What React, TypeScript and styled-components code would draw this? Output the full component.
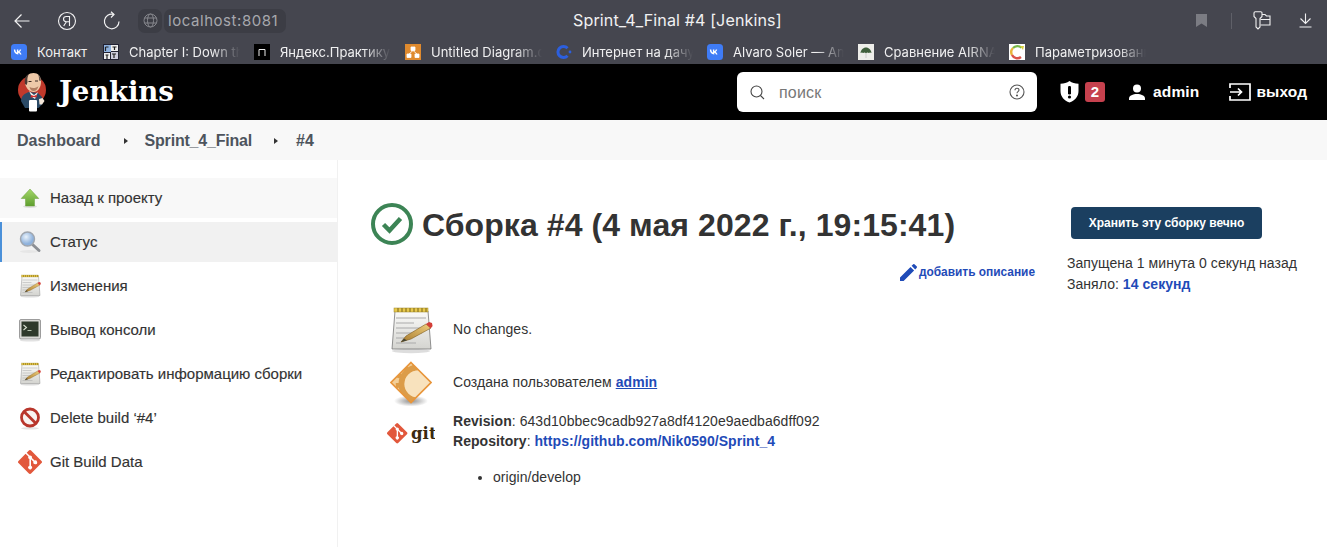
import React from "react";
import styled, { createGlobalStyle } from "styled-components";

const Global = createGlobalStyle`
  html, body { margin: 0; padding: 0; background: #fff; }
  body { font-family: "Liberation Sans", Arial, sans-serif; color: #333; overflow: hidden; }
  * { box-sizing: border-box; }
  svg { flex: none; }
`;
const Page = styled.div`width: 1327px; height: 547px; display: flex; flex-direction: column; overflow: hidden;`;

/* Browser chrome */
const Chrome = styled.div`height: 64px; background: #45464f; display: flex; flex-direction: column; font-family: Inter, sans-serif; color: #fff;`;
const TopRow = styled.div`height: 41px; display: flex; align-items: center; position: relative;`;
const NavIcon = styled.span<{ $ml: number }>`display: flex; margin-left: ${p => p.$ml}px;`;
const GlobePill = styled.span`margin-left: 17px; width: 24px; height: 24px; background: #3c3d45; border-radius: 7px; display: flex; align-items: center; justify-content: center;`;
const UrlPill = styled.span`margin-left: 2px; height: 24px; width: 122px; padding-left: 4px; background: #3c3d45; border-radius: 7px; font-size: 15px; line-height: 24px; color: #a7a8ad; letter-spacing: .55px; white-space: nowrap;`;
const PageTitle = styled.div`position: absolute; left: 573px; top: 11px; font-size: 16.1px; line-height: 19px; letter-spacing: .1px; color: #f1f1f2; white-space: nowrap;`;
const RightTools = styled.div`margin-left: auto; display: flex; align-items: center; padding-right: 15px;`;
const ToolDivider = styled.span`width: 1px; height: 16px; background: #5f6068; margin: 0 21px 0 24px;`;
const BookRow = styled.div`height: 23px; display: flex; align-items: flex-start; padding-top: 3px; position: relative;`;
const Book = styled.div<{ $w: number }>`width: ${p => p.$w}px; padding-right: 14px; display: flex; align-items: center; gap: 10px; height: 16px; flex: none;`;
const BookLabel = styled.span<{ $fade?: boolean }>`font-size: 13px; line-height: 16px; color: #f0f0f1; white-space: nowrap; overflow: hidden; flex: 1; min-width: 0; ${p => p.$fade ? "-webkit-mask-image: linear-gradient(90deg,#000 75%,transparent 100%);mask-image: linear-gradient(90deg,#000 75%,transparent 100%);" : ""}`;
const FavBox = styled.span`width: 16px; height: 16px; flex: none; display: flex;`;

/* Jenkins header */
const Header = styled.header`height: 56px; background: #000; display: flex; align-items: center; padding-left: 17px; color: #fff;`;
const Brand = styled.div`display: flex; align-items: center; gap: 12px; width: 720px; flex: none;`;
const BrandName = styled.span`font-family: "DejaVu Serif", "Liberation Serif", serif; font-weight: 700; font-size: 27.6px; line-height: 30px; letter-spacing: -.2px; margin-top: -1px;`;
const Search = styled.div`width: 300px; height: 40px; background: #fff; border-radius: 6px; display: flex; align-items: center; padding: 0 12px 0 13px; flex: none;`;
const SearchText = styled.span`font-size: 16px; color: #777; margin-left: 14px; flex: 1; letter-spacing: .2px; padding-top: 2px;`;
const Badge = styled.span`width: 20px; height: 20px; margin-left: 6px; background: #c6414e; border-radius: 3px; font-size: 15px; font-weight: 700; line-height: 20px; text-align: center;`;
const HeadLink = styled.span<{ $ml: number; $gap: number }>`margin-left: ${p => p.$ml}px; display: flex; align-items: center; font-weight: 700; font-size: 15.5px; gap: ${p => p.$gap}px; letter-spacing: .15px;`;

/* Breadcrumb */
const Crumbs = styled.nav`height: 40px; background: #f8f8f8; display: flex; align-items: center; padding: 1px 0 0 17px; color: #4d545d; font-size: 16px; font-weight: 700;`;
const Crumb = styled.span<{ $ls?: number }>`letter-spacing: ${p => p.$ls || 0}px;`;
const Sep = styled.span<{ $l: number; $r: number }>`width: 0; height: 0; border-left: 4px solid #333; border-top: 3.5px solid transparent; border-bottom: 3.5px solid transparent; margin: 0 ${p => p.$r}px 0 ${p => p.$l}px;`;

/* Body */
const Body = styled.div`flex: 1; display: flex; min-height: 0;`;
const Side = styled.aside`width: 338px; flex: none; border-right: 1px solid #f1f1f1; padding-top: 18px; display: flex; flex-direction: column; gap: 4px;`;
const Task = styled.a<{ $bg?: string; $active?: boolean }>`height: 40px; display: flex; align-items: center; gap: 10px; padding: 0 0 2px ${p => p.$active ? 18 : 20}px; background: ${p => p.$bg || "transparent"}; ${p => p.$active ? "border-left: 2px solid #4a90d9;" : ""} font-size: 15px; color: #333; -webkit-text-stroke: .15px #333;`;
const TaskIcon = styled.span`width: 20px; height: 24px; margin-top: 2px; flex: none; display: flex; align-items: center; justify-content: center;`;

const Main = styled.main`flex: 1; position: relative; display: flex; padding: 42px 0 0 33px;`;
const Left = styled.div`width: 664px; flex: none; display: flex; flex-direction: column;`;
const TitleRow = styled.div`display: flex; align-items: center; gap: 9px; height: 44px;`;
const Title = styled.h1`margin: 1px 0 0; font-size: 32px; line-height: 44px; font-weight: 700; color: #333; white-space: nowrap; letter-spacing: .08px;`;
const DescLink = styled.a`align-self: flex-end; margin-top: 17px; display: flex; align-items: center; gap: 2px; color: #1f4bb8; font-size: 11.9px; font-weight: 700; line-height: 18px;`;
const Rows = styled.div`margin-top: 25px; display: flex; flex-direction: column; padding-left: 16px;`;
const Row = styled.div<{ $h: number }>`min-height: ${p => p.$h}px; display: flex; align-items: flex-start; gap: 18px; font-size: 14px; line-height: 20px; letter-spacing: .05px;`;
const RowIcon = styled.span<{ $h?: number }>`width: 48px; ${p => p.$h ? `height: ${p.$h}px;` : ""} flex: none; display: flex; justify-content: center;`;
const RowText = styled.div<{ $pt: number }>`padding-top: ${p => p.$pt}px; color: #333;`;
const Strong = styled.b`font-weight: 700; color: #333;`;
const Link = styled.a<{ $ul?: boolean }>`color: #1f4bb8; font-weight: 700; text-decoration: ${p => p.$ul ? "underline" : "none"};`;
const Branches = styled.ul`margin: 16px 0 0; padding: 0 0 0 40px; list-style: disc;`;
const Right = styled.div`margin-left: 32px; display: flex; flex-direction: column; margin-top: 5px;`;
const Keep = styled.button`margin-left: 4px; width: 191px; height: 32px; background: #1b3f60; color: #fff; border: 0; border-radius: 4px; font: 700 12px "Liberation Sans", Arial, sans-serif;`;
const Meta = styled.div`margin-top: 14px; font-size: 14px; line-height: 21px; color: #333; white-space: nowrap; letter-spacing: .05px;`;

const Notepad = ({ s }: { s: number }) => (
  <svg width={s} height={s} viewBox="0 0 48 48">
    <defs>
      <linearGradient id={`np${s}`} x1="0" y1="0" x2="0" y2="1"><stop offset="0" stopColor="#fbfbf9" /><stop offset="1" stopColor="#d4d4d0" /></linearGradient>
      <linearGradient id={`pc${s}`} x1="0" y1="1" x2="1" y2="0"><stop offset="0" stopColor="#a87a2d" /><stop offset="1" stopColor="#efcf7d" /></linearGradient>
    </defs>
    <ellipse cx="24" cy="45" rx="19" ry="2.2" fill="#ddd" />
    <path d="M5 43l3-38h33l3 38z" fill={`url(#np${s})`} stroke="#777" strokeWidth=".8" />
    <rect x="7" y="2" width="34" height="4" fill="#e7c94d" stroke="#9b8426" strokeWidth=".5" />
    <path d="M11 2v4M15 2v4M19 2v4M23 2v4M27 2v4M31 2v4M35 2v4M39 2v4" stroke="#8b7420" strokeWidth="1.2" />
    <path d="M9 12h30M9 17h18M9 22h30M9 27h26M9 32h12M9 37h20" stroke="#aaa" strokeWidth="1" />
    <path d="M14 36l5-6 20-12 5 4-20 11z" fill={`url(#pc${s})`} stroke="#7c5a1e" strokeWidth=".6" />
    <path d="M14 36l3-3.500 3 2z" fill="#443" />
    <path d="M39 18l3-2 3 1 .6 3-2 2.500z" fill="#d33f38" />
  </svg>
);

const Up = () => (
  <svg width="20" height="22" viewBox="0 0 20 22">
    <defs><linearGradient id="gu" x1="0" y1="0" x2="0" y2="1"><stop offset="0" stopColor="#a5d86a" /><stop offset="1" stopColor="#5e9e2e" /></linearGradient></defs>
    <ellipse cx="10" cy="19.500" rx="7" ry="1.500" fill="#ddd" />
    <path d="M10 2l8.800 9.500H14.500V19h-9v-7.500H1.200z" fill="url(#gu)" stroke="#6a9f3b" strokeWidth=".5" />
  </svg>
);
const Magnifier = () => (
  <svg width="24" height="24" viewBox="0 0 24 24">
    <defs><radialGradient id="gm" cx=".4" cy=".35"><stop offset="0" stopColor="#e9f2fb" /><stop offset="1" stopColor="#8fb2dc" /></radialGradient></defs>
    <ellipse cx="11" cy="21.500" rx="9" ry="1.500" fill="#e6e6e6" />
    <path d="M14.500 14.500l6.500 6" stroke="#8c8f94" strokeWidth="3" strokeLinecap="round" />
    <circle cx="9.500" cy="9" r="7" fill="url(#gm)" stroke="#a0a6ae" strokeWidth="1.400" />
  </svg>
);
const Terminal = () => (
  <svg width="24" height="24" viewBox="0 0 24 24">
    <rect x="1.500" y="1.500" width="21" height="19.500" rx="1.500" fill="#d8d8d4" stroke="#888" strokeWidth=".8" />
    <rect x="3.500" y="3.500" width="17" height="15" fill="#2f3a2b" />
    <path d="M5.500 7l3 2.500-3 2.500" fill="none" stroke="#d8e0d0" strokeWidth="1.100" />
    <path d="M9.500 12.500h4" stroke="#b8c4b0" strokeWidth="1" />
    <ellipse cx="12" cy="22.500" rx="10" ry="1" fill="#e2e2e2" />
  </svg>
);
const NoEntry = () => (
  <svg width="22" height="24" viewBox="0 0 22 24">
    <ellipse cx="11" cy="22.300" rx="9" ry="1.300" fill="#e4e4e4" />
    <circle cx="11" cy="11.500" r="8.500" fill="#f8f3f1" stroke="#b8362c" strokeWidth="2.800" />
    <path d="M5 5.500l12 12" stroke="#b8362c" strokeWidth="2.800" />
  </svg>
);
const GIT_D = "M23.500 10.900 13.100.5a1.600 1.600 0 0 0-2.200 0L8.700 2.700l2.800 2.800a1.900 1.900 0 0 1 2.400 2.400l2.700 2.700a1.900 1.900 0 1 1-1.100 1.100l-2.500-2.500v6.600a1.900 1.900 0 1 1-1.600-.1v-6.700a1.900 1.900 0 0 1-1-2.500L7.600 3.800.5 10.900a1.600 1.600 0 0 0 0 2.200l10.400 10.400a1.600 1.600 0 0 0 2.200 0l10.400-10.400a1.600 1.600 0 0 0 0-2.200z";
const GitLogo = ({ s }: { s: number }) => (
  <svg width={s} height={s} viewBox="0 0 24 24"><path fill="#e2583c" d={GIT_D} /></svg>
);
const UserDiamond = () => (
  <svg width="42" height="46" viewBox="3 0 42 46">
    <defs>
      <clipPath id="dc"><path d="M24 1.500 44 21.500 24 41.500 4 21.500z" /></clipPath>
      <radialGradient id="gs"><stop offset="0" stopColor="#8e8e8e" /><stop offset="1" stopColor="#fff" /></radialGradient>
    </defs>
    <ellipse cx="24" cy="40" rx="17" ry="5.500" fill="url(#gs)" />
    <path d="M24 1.500 44 21.500 24 41.500 4 21.500z" fill="#f3cf98" />
    <g clipPath="url(#dc)">
      <circle cx="31" cy="23" r="16.500" fill="none" stroke="#dc9c48" strokeWidth="6" />
      <circle cx="31" cy="23" r="20.500" fill="none" stroke="#dc9c48" strokeWidth="3.500" strokeDasharray="5 5" />
      <circle cx="31" cy="23" r="13.500" fill="#f8e2bd" />
    </g>
    <path d="M24 1.500 44 21.500 24 41.500 4 21.500z" fill="none" stroke="#e8953a" strokeWidth="1.600" />
  </svg>
);
const Jenkins = () => (
  <svg width="30" height="40" viewBox="0 0 30 40">
    <circle cx="15" cy="18" r="14" fill="#c0392b" />
    <path d="M4 29c0-5 4-8 8-9l9 1 4 4 .5 7-4 4H8z" fill="#2b4a66" />
    <path d="M12 19l5 4 4-3-3 7-3-2z" fill="#f4f4f0" />
    <path d="M14 23l3 1 3-1.500-.5 3-3-.6-3 .8z" fill="#cf2d2d" />
    <path d="M8 10C8 4 12 1 16.500 1S24 4 24 10c0 5-3 10-7.500 10S8 15 8 10z" fill="#eec9a8" />
    <path d="M8 12C6.800 6 10 2.500 12 2c-1.500 2-2 5-1.500 8l-.8 3z" fill="#4a3a34" />
    <path d="M23.800 9C24 6 22.500 3.500 21 2.500c1 2 1.200 4 1 6z" fill="#6b5a50" />
    <path d="M12.500 15c3 1.700 6.500 1.300 9-1-.6 3-2.600 5-5 5-2 0-3.400-1.600-4-4z" fill="#b07f62" />
    <path d="M11.500 9.500h3M18 9h3" stroke="#3a2a22" strokeWidth="1" />
    <rect x="12" y="28" width="8" height="11.500" rx="1" fill="#fff" />
    <path d="M22 27l3.500-1 2 3-2.500 3.500h-2.500z" fill="#f4e6d8" />
  </svg>
);

const fav = {
  vk: <svg width="16" height="16" viewBox="0 0 16 16"><rect width="16" height="16" rx="3.500" fill="#3f7cf6" /><path d="M2.800 5.500h1.500c.1 2 1 3 1.600 3.100V5.500h1.400v1.800c.6-.1 1.200-.8 1.500-1.800h1.400c-.2 1.100-1 2-1.600 2.400.6.300 1.500 1 1.900 2.500H9c-.3-1-1-1.600-1.700-1.700v1.700h-.2c-2.700 0-4.200-1.900-4.300-4.900z" fill="#fff" /></svg>,
  ft: <svg width="16" height="16" viewBox="0 0 16 16"><rect width="16" height="16" fill="#223" /><rect x="1" y="1" width="7" height="7" fill="#8db0dd" /><rect x="8" y="1" width="7" height="6" fill="#eee" /><rect x="1" y="9" width="6" height="6" fill="#eee" /><rect x="8" y="8" width="7" height="7" fill="#ccd" /><path d="M2.500 3h3M2.500 3v4M9.500 3h4M11.500 3v3M2.500 11h3M4 11v4M9 10h4M11 10v4" stroke="#222" strokeWidth="1.200" /></svg>,
  ya: <svg width="16" height="16" viewBox="0 0 16 16"><rect width="16" height="16" fill="#000" /><path d="M5 12V5.500h6V12" fill="none" stroke="#eee" strokeWidth="1" /></svg>,
  diagram: <svg width="16" height="16" viewBox="0 0 16 16"><rect width="16" height="16" fill="#df8a2e" /><path d="M6 3h4v3.500H6zM2 10h4v3.500H2zM10 10h4v3.500h-4zM8 6.500L4 10M8 6.500l4 3.500" fill="#fff" stroke="#fff" strokeWidth=".8" /></svg>,
  c: <svg width="16" height="16" viewBox="0 0 16 16"><path d="M11.500 4.300a5.500 5.500 0 1 0 0 7.400" fill="none" stroke="#2c5fde" strokeWidth="3" /><circle cx="14" cy="8" r="1.400" fill="#2c5fde" /></svg>,
  air: <svg width="16" height="16" viewBox="0 0 16 16"><rect width="16" height="16" fill="#eeeeea" /><path d="M2.500 9C3 5 6 3.500 8 3.500S13 5 13.500 9c-1-.8-1.800-.8-2.700 0-.8-.8-1.800-.8-2.800.2-1-1-2-1-2.800-.2-.9-.8-1.700-.8-2.700 0z" fill="#3f5f3c" /><path d="M8 9v5" stroke="#ccc" strokeWidth="1" /></svg>,
  param: <svg width="16" height="16" viewBox="0 0 16 16"><rect width="16" height="16" fill="#fff" /><path d="M12.500 3.700A6 6 0 0 0 4 4" fill="none" stroke="#78b84a" strokeWidth="2.400" /><path d="M4 4a6 6 0 0 0-1 7" fill="none" stroke="#e8b43a" strokeWidth="2.400" /><path d="M3 11a6 6 0 0 0 9 2" fill="none" stroke="#d9534a" strokeWidth="2.400" /><path d="M11 2l4 0-1 4z" fill="#d8d040" /></svg>,
};

export default function App() {
  return (
    <Page>
      <Global />
      <Chrome>
        <TopRow>
          <NavIcon $ml={14}>
            <svg width="16" height="16" viewBox="0 0 16 16" fill="none" stroke="#f2f2f3" strokeWidth="1.200"><path d="M15.500 8H1M7.500 1.500 1 8l6.500 6.500" /></svg>
          </NavIcon>
          <NavIcon $ml={27}>
            <svg width="20" height="20" viewBox="0 0 20 20" fill="none" stroke="#f2f2f3" strokeWidth="1.100"><circle cx="10" cy="10" r="8.500" /><path d="M12.500 15V5.500H9.300c-1.700 0-2.800 1-2.800 2.600s1.100 2.600 2.800 2.600h3.200M9.400 10.700 6.700 15" /></svg>
          </NavIcon>
          <NavIcon $ml={26}>
            <svg width="18" height="20" viewBox="0 0 18 20" fill="none" stroke="#f2f2f3" strokeWidth="1.200"><path d="M10.500 3.400A7.300 7.300 0 1 0 16 10.500" /><path d="M8 .8 11 3.500 8 6.500" /></svg>
          </NavIcon>
          <GlobePill>
            <svg width="15" height="15" viewBox="0 0 15 15" fill="none" stroke="#85868c" strokeWidth="1"><circle cx="7.500" cy="7.500" r="6.500" /><ellipse cx="7.500" cy="7.500" rx="3" ry="6.500" /><path d="M1.500 5h12M1.500 10h12" /></svg>
          </GlobePill>
          <UrlPill>localhost:8081</UrlPill>
          <PageTitle>Sprint_4_Final #4 [Jenkins]</PageTitle>
          <RightTools>
            <svg width="11" height="13" viewBox="0 0 11 13"><path d="M0 0h11v13L5.500 9.500 0 13z" fill="#7b7c83" /></svg>
            <ToolDivider />
            <svg width="18" height="19" viewBox="0 0 18 19" fill="none" stroke="#f0f0f1" strokeWidth="1.100"><path d="M1 2c0-.8.5-1.300 1.300-1.300h5.400C8.500.7 9 1.200 9 2v3.500L7 7.500v8.500L5 18l-2-2V7.500L1 5.500z" /><path d="M9 3.500h3l1.500 1.500H17V14H7.500M7.500 8.500H17" /></svg>
            <svg style={{ marginLeft: 28 }} width="13" height="15" viewBox="0 0 13 15" fill="none" stroke="#f0f0f1" strokeWidth="1.100"><path d="M6.500 .5v10M1.500 5.500l5 5 5-5M.5 14h12" /></svg>
          </RightTools>
        </TopRow>
        <BookRow>
          <NavIcon $ml={11} />
          <Book $w={92}><FavBox>{fav.vk}</FavBox><BookLabel>Контакт</BookLabel></Book>
          <Book $w={151}><FavBox>{fav.ft}</FavBox><BookLabel $fade>Chapter I: Down the Rabbit</BookLabel></Book>
          <Book $w={151}><FavBox>{fav.ya}</FavBox><BookLabel $fade>Яндекс.Практикум</BookLabel></Book>
          <Book $w={151}><FavBox>{fav.diagram}</FavBox><BookLabel $fade>Untitled Diagram.drawio</BookLabel></Book>
          <Book $w={151}><FavBox>{fav.c}</FavBox><BookLabel $fade>Интернет на дачу</BookLabel></Book>
          <Book $w={151}><FavBox>{fav.vk}</FavBox><BookLabel $fade>Alvaro Soler — Animal</BookLabel></Book>
          <Book $w={151}><FavBox>{fav.air}</FavBox><BookLabel $fade>Сравнение AIRNAV</BookLabel></Book>
          <Book $w={151}><FavBox>{fav.param}</FavBox><BookLabel $fade>Параметризованные</BookLabel></Book>
        </BookRow>
      </Chrome>

      <Header>
        <Brand><Jenkins /><BrandName>Jenkins</BrandName></Brand>
        <Search>
          <svg width="15" height="15" viewBox="0 0 15 15" fill="none" stroke="#444" strokeWidth="1.100"><circle cx="6.500" cy="6.500" r="5.500" /><path d="M10.500 10.500 14 14" /></svg>
          <SearchText>поиск</SearchText>
          <svg width="16" height="16" viewBox="0 0 16 16" fill="none" stroke="#555" strokeWidth="1.100"><circle cx="8" cy="8" r="7" /><path d="M6 6.200c0-1.300 1-2 2-2s2 .8 2 1.900c0 1.500-2 1.600-2 3.100" /><circle cx="8" cy="11.500" r=".5" fill="#555" /></svg>
        </Search>
        <NavIcon $ml={23}>
          <svg width="19" height="22" viewBox="0 0 19 22"><path d="M9.500 0c2.500 1.700 5.500 2.600 9 2.800v7.200c0 5.500-3.700 9.800-9 11.500C4.200 19.800.5 15.500.5 10V2.800C4 2.600 7 1.700 9.500 0z" fill="#fff" /><rect x="8" y="5" width="3" height="8.500" rx="1.200" fill="#000" /><circle cx="9.500" cy="16" r="1.600" fill="#000" /></svg>
        </NavIcon>
        <Badge>2</Badge>
        <HeadLink $ml={24} $gap={8}>
          <svg width="16" height="16" viewBox="0 0 16 16" fill="#fff"><circle cx="8" cy="4.500" r="4" /><path d="M0 16v-1.500C0 11.500 4 10 8 10s8 1.500 8 4.500V16z" /></svg>
          admin
        </HeadLink>
        <HeadLink $ml={30} $gap={5}>
          <svg width="22" height="18" viewBox="0 0 22 18" fill="none" stroke="#fff" strokeWidth="1.700"><path d="M1 5V1h20v16H1v-4M1 9h11M9 5.500 12.500 9 9 12.500" /></svg>
          выход
        </HeadLink>
      </Header>

      <Crumbs>
        <Crumb>Dashboard</Crumb><Sep $l={23} $r={17} /><Crumb $ls={-0.2}>Sprint_4_Final</Crumb><Sep $l={22} $r={18} /><Crumb>#4</Crumb>
      </Crumbs>

      <Body>
        <Side>
          <Task $bg="#f8f8f8"><TaskIcon><Up /></TaskIcon>Назад к проекту</Task>
          <Task $bg="#f1f1f1" $active><TaskIcon><Magnifier /></TaskIcon>Статус</Task>
          <Task><TaskIcon><Notepad s={24} /></TaskIcon>Изменения</Task>
          <Task><TaskIcon><Terminal /></TaskIcon>Вывод консоли</Task>
          <Task><TaskIcon><Notepad s={24} /></TaskIcon>Редактировать информацию сборки</Task>
          <Task><TaskIcon><NoEntry /></TaskIcon>Delete build ‘#4’</Task>
          <Task><TaskIcon><GitLogo s={24} /></TaskIcon>Git Build Data</Task>
        </Side>
        <Main>
          <Left>
            <TitleRow>
              <svg width="42" height="42" viewBox="0 0 42 42"><circle cx="21" cy="21" r="19" fill="none" stroke="#3c8455" strokeWidth="4" /><path d="M12.500 21.500l6 6 11-12" fill="none" stroke="#3c8455" strokeWidth="4.500" /></svg>
              <Title>Сборка #4 (4 мая 2022 г., 19:15:41)</Title>
            </TitleRow>
            <DescLink>
              <svg width="17" height="17" viewBox="0 0 17 17"><path d="M0 17v-3.600L10.500 2.900l3.600 3.600L3.600 17zM11.600 1.800 13 .4a1.200 1.200 0 0 1 1.700 0l1.900 1.900a1.200 1.200 0 0 1 0 1.700l-1.400 1.400z" fill="#1f4bb8" /></svg>
              добавить описание
            </DescLink>
            <Rows>
              <Row $h={55}><RowIcon><Notepad s={48} /></RowIcon><RowText $pt={13}>No changes.</RowText></Row>
              <Row $h={42}><RowIcon $h={42}><UserDiamond /></RowIcon><RowText $pt={11}>Создана пользователем <Link $ul>admin</Link></RowText></Row>
              <Row $h={60}>
                <RowIcon>
                  <svg width="48" height="48" viewBox="0 0 48 48"><g transform="translate(0 20) scale(.85)"><path fill="#e2583c" d={GIT_D} /></g><text x="24" y="35.500" fontFamily="DejaVu Serif, serif" fontWeight="700" fontSize="16.500" fill="#3a2a10">git</text></svg>
                </RowIcon>
                <RowText $pt={8}>
                  <div><Strong>Revision</Strong>: 643d10bbec9cadb927a8df4120e9aedba6dff092</div>
                  <div><Strong>Repository</Strong>: <Link>https://github.com/Nik0590/Sprint_4</Link></div>
                  <Branches><li>origin/develop</li></Branches>
                </RowText>
              </Row>
            </Rows>
          </Left>
          <Right>
            <Keep>Хранить эту сборку вечно</Keep>
            <Meta>
              Запущена 1 минута 0 секунд назад<br />
              Заняло: <Link>14 секунд</Link>
            </Meta>
          </Right>
        </Main>
      </Body>
    </Page>
  );
}
